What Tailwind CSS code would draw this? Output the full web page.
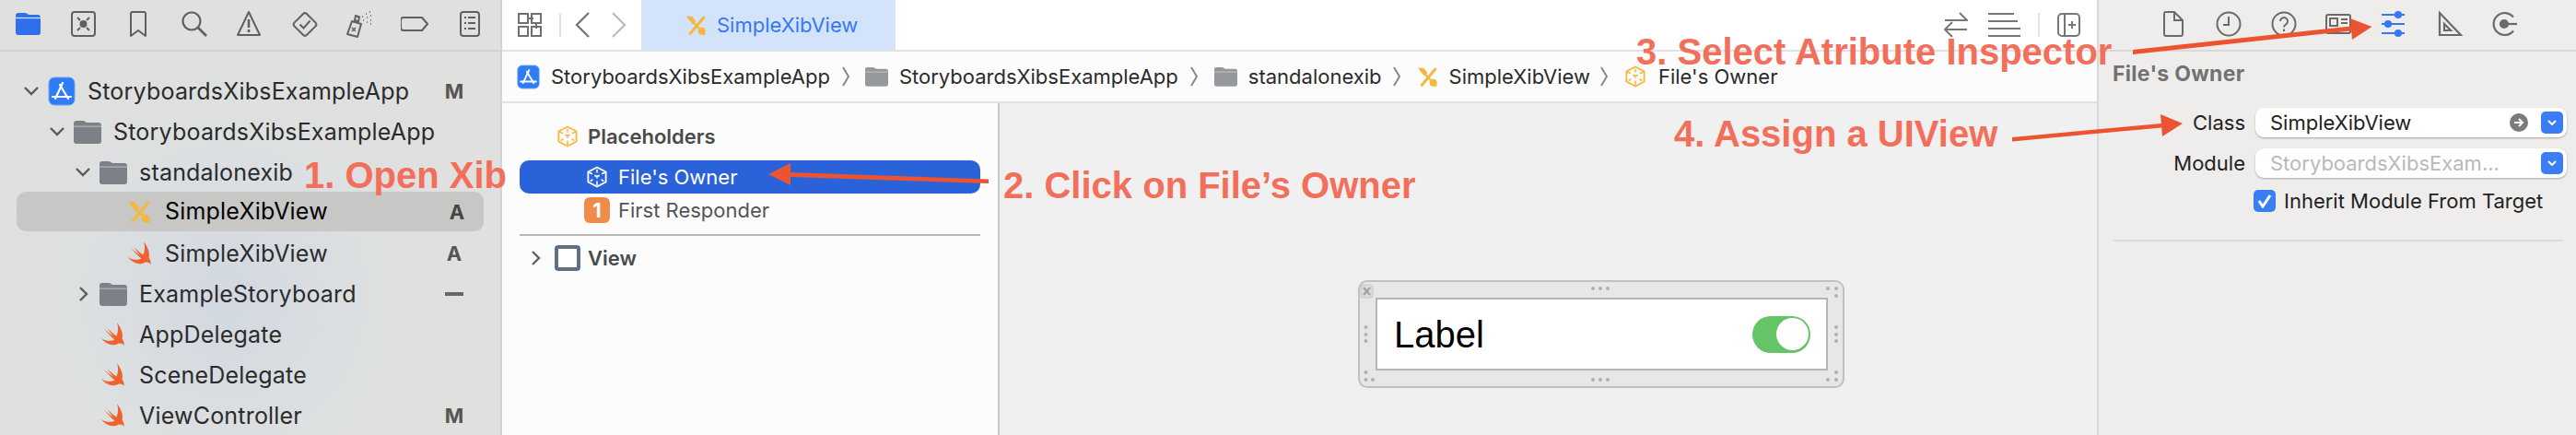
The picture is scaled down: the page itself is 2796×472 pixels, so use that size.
<!doctype html>
<html>
<head>
<meta charset="utf-8">
<script src="https://cdn.jsdelivr.net/npm/@tailwindcss/browser@4"></script>
</head>
<body class="bg-white">
<svg class="absolute w-0 h-0">
  <defs>
    <symbol id="swift" viewBox="0 0 28 28"><path fill="#f0622d" d="M18 1C23 8 25 14 23.500 18.500C25.500 21 26 24 25.500 26C24 23.500 21 23 19 24C13 27 5.500 24 1 18C6 21.500 12 21.500 15.500 19.500C11 16 6.500 11 4 8C8 11.500 12 14.500 14 15.500C11.500 13 9 9.500 7.500 7C11 10.500 15.500 14.500 17.500 15.500C19.500 11 19.500 6 18 1Z"/></symbol>
    <symbol id="xib" viewBox="0 0 26 26"><g fill="none" stroke="#f5b73e" stroke-linecap="round"><path d="M22.500 3.500L6 23" stroke-width="3.400"/><path d="M5 4l11 12" stroke-width="2.600"/></g><path fill="#f5b73e" d="M1 2h7l5 6-4 4z"/><circle cx="20" cy="20" r="4.500" fill="#f5b73e"/><path fill="#f5b73e" d="M20 24.500h5l-2-3z"/></symbol>
    <symbol id="folder" viewBox="0 0 30 26"><path fill="#7c8187" d="M0 4a3 3 0 0 1 3-3h7c2 0 3 2 5 2h12a3 3 0 0 1 3 3v17a3 3 0 0 1-3 3H3a3 3 0 0 1-3-3z"/><path fill="#d8dadc" d="M0 6.500h30v1.200H0z" opacity=".6"/></symbol>
    <symbol id="cube" viewBox="0 0 24 26"><g fill="none" stroke="currentColor" stroke-width="2"><path d="M12 1.500L22.500 7V19L12 24.500L1.500 19V7Z"/><path d="M12 4v4M12 11v4M12 18v5M2.500 7.500l4 2M9 11l3 2 3-2M17.500 9.500l4-2M7 16l-3 2M17 16l3 2" stroke-width="1.700"/></g></symbol>
    <symbol id="app" viewBox="0 0 30 32"><rect x="1" y="1" width="28" height="30" rx="6" fill="#2f7cf6" stroke="#6aa4f8" stroke-width="1"/><g stroke="#fff" stroke-width="2.200" fill="none" stroke-linecap="round"><path d="M16 7L8 24"/><path d="M13 9l9 15"/><path d="M5 22h15"/><path d="M22 22h3"/></g></symbol>
  </defs>
</svg>

<div class="relative w-[2796px] h-[472px] overflow-hidden flex font-['Inter',sans-serif] text-[#2b2b2b]">

  <!-- Navigator -->
  <aside class="w-[545px] shrink-0 h-full border-r-2 border-[#d2d2d1] bg-[radial-gradient(ellipse_at_45%_68%,#d2d8e1_0%,#dde0e1_38%,#e0e0de_68%)]">
    <div class="h-[56px] border-b-2 border-[#d2d2d0] bg-[#e0e0de] pl-[15px] flex items-center gap-[30px] pb-[2px]">
      <svg class="w-[30px] h-[30px]" viewBox="0 0 30 30"><path fill="#2f6fed" d="M2 6a3 3 0 0 1 3-3h7c2 0 3 2 5 2h9a3 3 0 0 1 3 3v16a3 3 0 0 1-3 3H5a3 3 0 0 1-3-3z"/><path d="M2 8.500h27" stroke="#dfe8fb" stroke-width="1.200"/></svg>
      <svg class="w-[30px] h-[30px]" viewBox="0 0 30 30" fill="none" stroke="#606060" stroke-width="2"><rect x="3" y="2" width="25" height="26" rx="3"/><circle cx="15.500" cy="15" r="3" fill="#606060"/><path d="M9 8l3 3M22 8l-3 3M9 22l3-3M22 22l-3-3"/></svg>
      <svg class="w-[30px] h-[30px]" viewBox="0 0 30 30" fill="none" stroke="#606060" stroke-width="2"><path d="M7 4a2 2 0 0 1 2-2h12a2 2 0 0 1 2 2v24l-8-6-8 6z" stroke-linejoin="round"/></svg>
      <svg class="w-[30px] h-[30px]" viewBox="0 0 30 30" fill="none" stroke="#606060" stroke-width="2.200"><circle cx="13" cy="12" r="9.500"/><path d="M20 19l9 9" stroke-width="2.600"/></svg>
      <svg class="w-[30px] h-[30px]" viewBox="0 0 30 30" fill="none" stroke="#606060" stroke-width="2"><path d="M15 2L27 27H3z" stroke-linejoin="round"/><path d="M15 10v9M15 21v3" stroke-width="2.600"/></svg>
      <svg class="w-[30px] h-[30px]" viewBox="0 0 30 30" fill="none" stroke="#606060" stroke-width="2"><rect x="6.500" y="6" width="19" height="19" rx="3" transform="rotate(45 16 15.500)"/><path d="M10.500 15.500l4 4 7-8"/></svg>
      <svg class="w-[30px] h-[30px]" viewBox="0 0 30 30" fill="none" stroke="#606060" stroke-width="2"><path d="M7 12l10 3-4 14-11-3z" stroke-linejoin="round"/><path d="M11 6l4 1.500-1 5-4-1.500z"/><path d="M7 19l4 4M11 19l-4 4" stroke-width="1.500"/><path d="M18 7h1M22 4h1M26 2h1M19 11h1M23 8h1M27 6h1M23 13h1M27 11h1M27 15h1" stroke-width="1.500"/></svg>
      <svg class="w-[30px] h-[30px]" viewBox="0 0 30 30" fill="none" stroke="#606060" stroke-width="2"><path d="M0 11a3 3 0 0 1 3-3h20l6 7-6 7H3a3 3 0 0 1-3-3z" stroke-linejoin="round"/></svg>
      <svg class="w-[30px] h-[30px]" viewBox="0 0 30 30" fill="none" stroke="#606060" stroke-width="2"><rect x="5" y="2" width="20" height="26" rx="3"/><path d="M9 8h2M13 8h8M9 14h2M13 14h8M9 20h2M13 20h8"/></svg>
    </div>

    <div class="pt-[21px] text-[25px] tracking-[0.2px] leading-none">
      <div class="h-[44px] flex items-center pl-[25px]">
        <svg class="w-[18px] h-[12px]" viewBox="0 0 18 12" fill="none" stroke="#5b5b5b" stroke-width="2.400"><path d="M2 2l7 7 7-7"/></svg>
        <svg class="w-[30px] h-[32px] ml-[9px]"><use href="#app"/></svg>
        <span class="ml-[13px]">StoryboardsXibsExampleApp</span>
        <span class="ml-auto w-[30px] mr-[35px] text-center font-bold text-[#555] text-[22px]">M</span>
      </div>
      <div class="h-[44px] flex items-center pl-[53px]">
        <svg class="w-[18px] h-[12px]" viewBox="0 0 18 12" fill="none" stroke="#5b5b5b" stroke-width="2.400"><path d="M2 2l7 7 7-7"/></svg>
        <svg class="w-[30px] h-[26px] ml-[9px]"><use href="#folder"/></svg>
        <span class="ml-[13px]">StoryboardsXibsExampleApp</span>
      </div>
      <div class="h-[44px] flex items-center pl-[81px]">
        <svg class="w-[18px] h-[12px]" viewBox="0 0 18 12" fill="none" stroke="#5b5b5b" stroke-width="2.400"><path d="M2 2l7 7 7-7"/></svg>
        <svg class="w-[30px] h-[26px] ml-[9px]"><use href="#folder"/></svg>
        <span class="ml-[13px]">standalonexib</span>
      </div>
      <div class="-mt-[1px] mb-[2px] mx-[18px] h-[43px] rounded-[10px] bg-[#c7c7c5] flex items-center pl-[120px]">
        <svg class="w-[26px] h-[26px]"><use href="#xib"/></svg>
        <span class="ml-[15px] text-black">SimpleXibView</span>
        <span class="ml-auto w-[30px] mr-[14px] text-center font-bold text-[#444] text-[22px]">A</span>
      </div>
      <div class="h-[44px] flex items-center pl-[138px]">
        <svg class="w-[28px] h-[28px]"><use href="#swift"/></svg>
        <span class="ml-[13px]">SimpleXibView</span>
        <span class="ml-auto w-[30px] mr-[35px] text-center font-bold text-[#555] text-[22px]">A</span>
      </div>
      <div class="h-[44px] flex items-center pl-[81px]">
        <svg class="w-[18px] h-[18px]" viewBox="0 0 18 18" fill="none" stroke="#5b5b5b" stroke-width="2.400"><path d="M6 2l7 7-7 7"/></svg>
        <svg class="w-[30px] h-[26px] ml-[9px]"><use href="#folder"/></svg>
        <span class="ml-[13px]">ExampleStoryboard</span>
        <span class="ml-auto mr-[40px] w-[20px] h-[4px] bg-[#666]"></span>
      </div>
      <div class="h-[44px] flex items-center pl-[109px]">
        <svg class="w-[28px] h-[28px]"><use href="#swift"/></svg>
        <span class="ml-[14px]">AppDelegate</span>
      </div>
      <div class="h-[44px] flex items-center pl-[109px]">
        <svg class="w-[28px] h-[28px]"><use href="#swift"/></svg>
        <span class="ml-[14px]">SceneDelegate</span>
      </div>
      <div class="h-[44px] flex items-center pl-[109px]">
        <svg class="w-[28px] h-[28px]"><use href="#swift"/></svg>
        <span class="ml-[14px]">ViewController</span>
        <span class="ml-auto w-[30px] mr-[35px] text-center font-bold text-[#555] text-[22px]">M</span>
      </div>
    </div>
  </aside>

  <!-- Editor -->
  <main class="flex-1 h-full flex flex-col min-w-0 text-[22px] leading-none">
    <div class="h-[56px] shrink-0 bg-white border-b-2 border-[#e2e2e2] flex items-center pl-[17px] pr-[18px]">
      <svg class="w-[26px] h-[26px]" viewBox="0 0 26 26" fill="none" stroke="#707070" stroke-width="2"><rect x="1" y="1" width="10" height="10"/><rect x="15" y="1" width="10" height="10"/><rect x="1" y="15" width="10" height="10"/><rect x="15" y="15" width="10" height="10"/><path d="M11 6h6M20 11v6"/></svg>
      <span class="ml-[19px] w-[2px] h-[26px] bg-[#e2e2e2]"></span>
      <svg class="ml-[15px] w-[16px] h-[28px]" viewBox="0 0 16 28" fill="none" stroke="#777" stroke-width="2.400"><path d="M15 1L2 14l13 13"/></svg>
      <svg class="ml-[24px] w-[16px] h-[28px]" viewBox="0 0 16 28" fill="none" stroke="#bdbdbd" stroke-width="2.400"><path d="M1 1l13 13L1 27"/></svg>
      <div class="ml-[16px] w-[276px] self-stretch bg-[#d3e3fa] flex items-center pl-[48px]">
        <svg class="w-[23px] h-[23px]"><use href="#xib"/></svg>
        <span class="ml-[11px] text-[#3478f6]">SimpleXibView</span>
      </div>
      <svg class="ml-auto w-[26px] h-[28px]" viewBox="0 0 26 28" fill="none" stroke="#777" stroke-width="2"><path d="M1 9h23M17 1l8 8-8 0M25 19H2M9 11l-8 8 8 8"/></svg>
      <svg class="ml-[22px] w-[35px] h-[26px]" viewBox="0 0 35 26" fill="none" stroke="#777" stroke-width="2"><path d="M0 1h28M0 9h32M0 17h35M0 25h35"/></svg>
      <span class="ml-[19px] w-[2px] h-[26px] bg-[#e2e2e2]"></span>
      <svg class="ml-[19px] w-[25px] h-[26px]" viewBox="0 0 25 26" fill="none" stroke="#777" stroke-width="2"><rect x="1" y="1" width="23" height="24" rx="4"/><path d="M8 1v24M12 13h8M16 9v8"/></svg>
    </div>

    <div class="h-[56px] shrink-0 bg-[#fcfcfc] border-b-2 border-[#e2e2e2] flex items-center pl-[16px]">
      <svg class="w-[25px] h-[27px]"><use href="#app"/></svg>
      <span class="ml-[12px]">StoryboardsXibsExampleApp</span>
      <svg class="ml-[13px] w-[8px] h-[22px]" viewBox="0 0 8 22" fill="none" stroke="#888" stroke-width="2"><path d="M1 1l6 10-6 10"/></svg>
      <svg class="ml-[17px] w-[25px] h-[22px] opacity-80"><use href="#folder"/></svg>
      <span class="ml-[12px]">StoryboardsXibsExampleApp</span>
      <svg class="ml-[13px] w-[8px] h-[22px]" viewBox="0 0 8 22" fill="none" stroke="#888" stroke-width="2"><path d="M1 1l6 10-6 10"/></svg>
      <svg class="ml-[18px] w-[25px] h-[22px] opacity-80"><use href="#folder"/></svg>
      <span class="ml-[12px]">standalonexib</span>
      <svg class="ml-[12px] w-[8px] h-[22px]" viewBox="0 0 8 22" fill="none" stroke="#888" stroke-width="2"><path d="M1 1l6 10-6 10"/></svg>
      <svg class="ml-[18px] w-[23px] h-[23px]"><use href="#xib"/></svg>
      <span class="ml-[12px]">SimpleXibView</span>
      <svg class="ml-[11px] w-[8px] h-[22px]" viewBox="0 0 8 22" fill="none" stroke="#888" stroke-width="2"><path d="M1 1l6 10-6 10"/></svg>
      <svg class="ml-[19px] w-[22px] h-[24px] text-[#f5b73e]"><use href="#cube"/></svg>
      <span class="ml-[14px]">File's Owner</span>
    </div>

    <div class="flex-1 flex min-h-0">
      <div class="w-[540px] shrink-0 bg-[#fcfcfc] border-r-2 border-[#c8c8c8] pt-[20px]">
        <div class="h-[32px] flex items-center pl-[60px]">
          <svg class="w-[22px] h-[24px] text-[#f5b73e]"><use href="#cube"/></svg>
          <span class="ml-[11px] font-semibold text-[#4a4a4a]">Placeholders</span>
        </div>
        <div class="mt-[10px] ml-[19px] mr-[19px] h-[36px] rounded-[10px] bg-[#2a62d9] flex items-center pl-[73px] text-white">
          <svg class="w-[22px] h-[24px] text-white"><use href="#cube"/></svg>
          <span class="ml-[12px]">File's Owner</span>
        </div>
        <div class="mt-[2px] h-[32px] flex items-center pl-[89px] text-[#555]">
          <span class="w-[28px] h-[28px] rounded-[6px] bg-[#ef8b4b] text-white font-bold text-[22px] flex items-center justify-center">1</span>
          <span class="ml-[9px]">First Responder</span>
        </div>
        <div class="mt-[10px] ml-[19px] mr-[19px] h-[2px] bg-[#b8b8b8]"></div>
        <div class="mt-[8px] h-[32px] flex items-center pl-[31px]">
          <svg class="w-[12px] h-[18px]" viewBox="0 0 12 18" fill="none" stroke="#606060" stroke-width="2.400"><path d="M2 2l7 7-7 7"/></svg>
          <span class="ml-[14px] w-[28px] h-[28px] rounded-[4px] border-[4px] border-[#5f7285] bg-white"></span>
          <span class="ml-[8px] font-semibold text-[#4a4a4a]">View</span>
        </div>
      </div>

      <div class="flex-1 bg-[#f0f0f0] pl-[389px] pt-[192px]">
        <div class="relative w-[528px] h-[117px] rounded-[10px] border-2 border-[#c0c0c0] bg-[#e7e7e7] pl-[17px] pt-[17px]">
          <div class="w-[491px] h-[79px] bg-white border-2 border-[#b5b5b5] flex items-center justify-between pl-[18px] pr-[17px]">
            <span class="font-['Liberation_Sans',sans-serif] text-[40px] text-black">Label</span>
            <span class="w-[63px] h-[40px] rounded-full bg-[#65c466] flex items-center justify-end pr-[2px]"><span class="w-[35px] h-[35px] rounded-full bg-white"></span></span>
          </div>
          <svg class="absolute -left-[2px] -top-[2px] w-[528px] h-[117px]" viewBox="0 0 528 117" fill="#b0b0b0">
            <rect x="3" y="5" width="13" height="14" rx="3" fill="#dcdcdc" stroke="#c8c8c8"/>
            <path d="M6 8l7 8M13 8l-7 8" stroke="#a5a5a5" stroke-width="2.500"/>
            <circle cx="255" cy="9" r="2"/><circle cx="263" cy="9" r="2"/><circle cx="271" cy="9" r="2"/>
            <circle cx="255" cy="108" r="2"/><circle cx="263" cy="108" r="2"/><circle cx="271" cy="108" r="2"/>
            <circle cx="8.500" cy="51" r="2"/><circle cx="8.500" cy="59" r="2"/><circle cx="8.500" cy="66" r="2"/>
            <circle cx="519" cy="51" r="2"/><circle cx="519" cy="59" r="2"/><circle cx="519" cy="66" r="2"/>
            <circle cx="510" cy="9" r="2"/><circle cx="519" cy="9" r="2"/><circle cx="519" cy="17" r="2"/>
            <circle cx="8.500" cy="100" r="2"/><circle cx="8.500" cy="108" r="2"/><circle cx="16" cy="108" r="2"/>
            <circle cx="510" cy="108" r="2"/><circle cx="519" cy="108" r="2"/><circle cx="519" cy="100" r="2"/>
          </svg>
        </div>
      </div>
    </div>
  </main>

  <!-- Inspector -->
  <aside class="w-[520px] shrink-0 h-full bg-[#eeedec] border-l-2 border-[#d9d9d9] text-[22px] leading-none text-[#222]">
    <div class="h-[56px] border-b-2 border-[#d9d9d8] pl-[66px] flex items-center gap-[29.800px] pb-[2px]">
      <svg class="w-[30px] h-[30px]" viewBox="0 0 30 30" fill="none" stroke="#6a6a6a" stroke-width="2"><path d="M5 4a2 2 0 0 1 2-2h9l9 9v15a2 2 0 0 1-2 2H7a2 2 0 0 1-2-2zM16 2v9h9"/></svg>
      <svg class="w-[30px] h-[30px]" viewBox="0 0 30 30" fill="none" stroke="#6a6a6a" stroke-width="2"><circle cx="15" cy="15" r="12.500"/><path d="M15 7v9H9"/></svg>
      <svg class="w-[30px] h-[30px]" viewBox="0 0 30 30" fill="none" stroke="#6a6a6a" stroke-width="2"><circle cx="15" cy="15" r="12.500"/><path d="M11 12a4 4 0 1 1 6 3.500c-1.500 1-2 1.500-2 3M15 20.500v2.500"/></svg>
      <svg class="w-[30px] h-[30px]" viewBox="0 0 30 30" fill="none" stroke="#6a6a6a" stroke-width="2"><rect x="2" y="5" width="26" height="20" rx="2"/><rect x="6" y="9" width="8" height="8"/><path d="M18 10h7M18 14h7M6 21h18"/></svg>
      <svg class="w-[30px] h-[30px]" viewBox="0 0 30 30" fill="none" stroke="#3478f6" stroke-width="2.200"><path d="M2 5h25M2 15h25M2 25h25"/><circle cx="20" cy="5" r="3" fill="#3478f6"/><circle cx="9" cy="15" r="3" fill="#3478f6"/><circle cx="20" cy="25" r="3" fill="#3478f6"/></svg>
      <svg class="w-[30px] h-[30px]" viewBox="0 0 30 30" fill="none" stroke="#6a6a6a" stroke-width="2.200"><path d="M5 3v24h23zM10 15v7h7z"/></svg>
      <svg class="w-[30px] h-[30px]" viewBox="0 0 30 30" fill="none" stroke="#6a6a6a" stroke-width="2.200"><path d="M25 7.500a12 12 0 1 0 0 15"/><circle cx="15" cy="15" r="4" fill="#6a6a6a"/><path d="M15 15h14"/></svg>
    </div>
    <div class="h-[48px] pl-[15px] flex items-center font-bold text-[#727272] text-[23px] tracking-[0.3px]">File's Owner</div>
    <div class="mt-[13px] flex items-center">
      <span class="w-[159px] text-right">Class</span>
      <div class="ml-[11px] w-[338px] h-[32px] bg-white rounded-[9px] shadow-[0_1px_2px_rgba(0,0,0,.3)] flex items-center pl-[16px]">
        <span class="flex-1">SimpleXibView</span>
        <svg class="w-[20px] h-[20px]" viewBox="0 0 20 20"><circle cx="10" cy="10" r="10" fill="#7b7b7b"/><path d="M5 10h9M10 6l4 4-4 4" fill="none" stroke="#fff" stroke-width="2"/></svg>
        <span class="ml-[14px] mr-[4px] w-[24px] h-[24px] rounded-[5px] bg-[#3a7df5] flex items-center justify-center"><svg class="w-[10px] h-[6px]" viewBox="0 0 10 6" fill="none" stroke="#fff" stroke-width="2"><path d="M1 1l4 4 4-4"/></svg></span>
      </div>
    </div>
    <div class="mt-[12px] flex items-center">
      <span class="w-[159px] text-right">Module</span>
      <div class="ml-[11px] w-[338px] h-[32px] bg-white rounded-[9px] shadow-[0_1px_2px_rgba(0,0,0,.3)] flex items-center pl-[16px]">
        <span class="flex-1 text-[#b9b9b9]">StoryboardsXibsExam...</span>
        <span class="ml-[14px] mr-[4px] w-[24px] h-[24px] rounded-[5px] bg-[#3a7df5] flex items-center justify-center"><svg class="w-[10px] h-[6px]" viewBox="0 0 10 6" fill="none" stroke="#fff" stroke-width="2"><path d="M1 1l4 4 4-4"/></svg></span>
      </div>
    </div>
    <div class="mt-[13px] ml-[168px] flex items-center">
      <span class="w-[24px] h-[24px] rounded-[5px] bg-[#3a7df5] flex items-center justify-center"><svg class="w-[16px] h-[16px]" viewBox="0 0 16 16" fill="none" stroke="#fff" stroke-width="3"><path d="M2 8l4 6 8-12"/></svg></span>
      <span class="ml-[9px]">Inherit Module From Target</span>
    </div>
    <div class="mt-[30px] ml-[16px] w-[488px] h-[2px] bg-[#dcdcdc]"></div>
  </aside>

  <!-- Annotations -->
  <svg class="absolute left-0 top-0 w-[2796px] h-[472px] pointer-events-none" viewBox="0 0 2796 472">
    <g fill="#ec5330" stroke="none">
      <path d="M858 187L1073 194.500V199L858 192Z"/><path d="M834 189L858 177V201Z"/>
      <path d="M2315 54L2552 28.500L2552 33.500L2315 59Z"/><path d="M2574.500 29L2551 20L2553 43Z"/>
      <path d="M2184 149L2346 134L2346 138.500L2184 153.500Z"/><path d="M2369 134L2345 124L2347 148Z"/>
    </g>
  </svg>
  <div class="absolute left-[330px] top-[166px] font-['Liberation_Sans',sans-serif] font-bold text-[40px] leading-[48px] text-[#f26f5c] whitespace-nowrap">1. Open Xib</div>
  <div class="absolute left-[1089px] top-[177px] font-['Liberation_Sans',sans-serif] font-bold text-[40px] leading-[48px] text-[#f26f5c] whitespace-nowrap">2. Click on File’s Owner</div>
  <div class="absolute left-[1776px] top-[32px] font-['Liberation_Sans',sans-serif] font-bold text-[40px] leading-[48px] text-[#f26f5c] whitespace-nowrap">3. Select Atribute Inspector</div>
  <div class="absolute left-[1817px] top-[121px] font-['Liberation_Sans',sans-serif] font-bold text-[40px] leading-[48px] text-[#f26f5c] whitespace-nowrap">4. Assign a UIView</div>
</div>
</body>
</html>
